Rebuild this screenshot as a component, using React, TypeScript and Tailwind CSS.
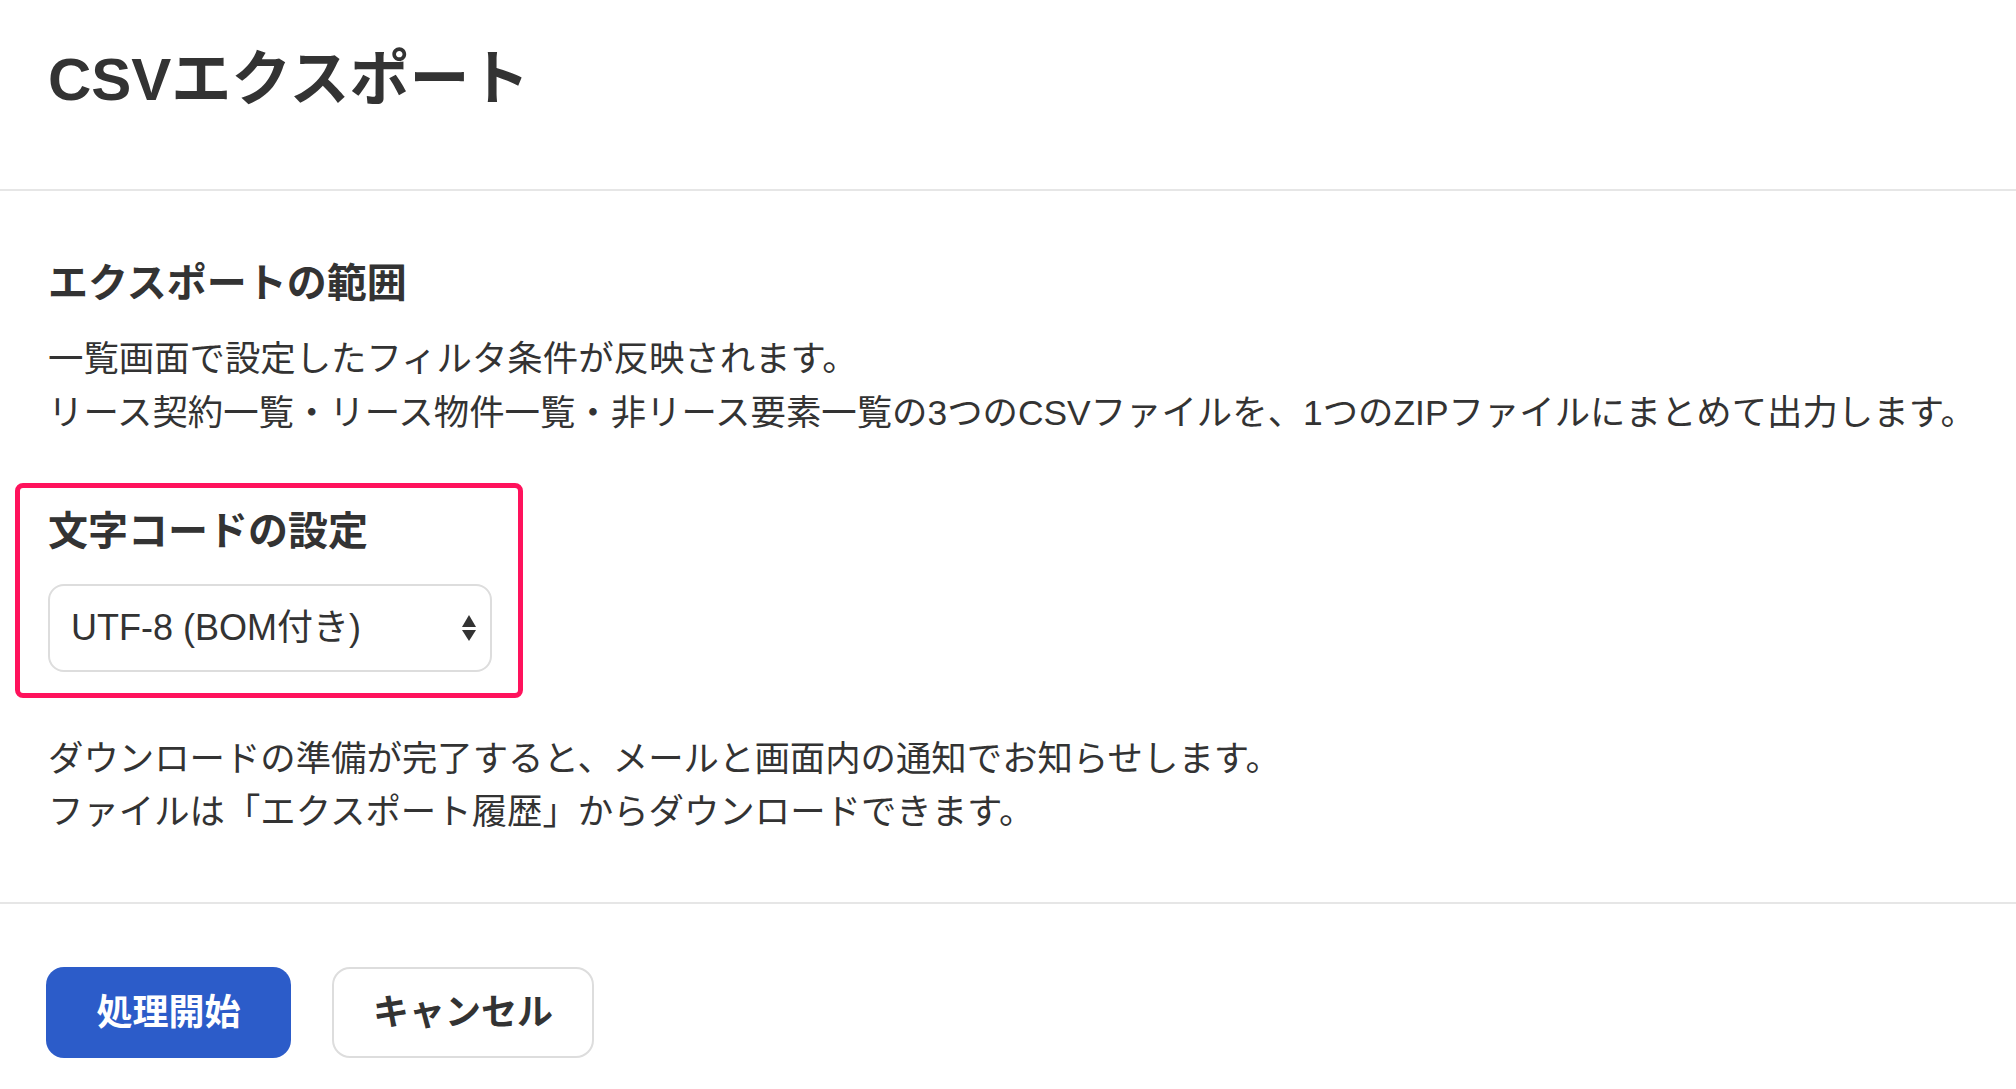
import { useState } from "react"

const font = { fontFamily: '"Liberation Sans", "Noto Sans CJK JP", sans-serif' }

export default function App() {
  const [encoding, setEncoding] = useState("utf8bom")

  return (
    <div className="min-h-screen bg-white text-[#333333]" style={font}>
      <div className="h-[191px] border-b-2 border-[#e6e6e6] px-[48px] pt-[44px]">
        <h1 className="text-[60px] font-bold leading-[72px]">CSVエクスポート</h1>
      </div>

      <div className="px-[48px]">
        <h2 className="mt-[68px] text-[40px] font-bold leading-[48px]">エクスポートの範囲</h2>
        <p className="mt-[25px] whitespace-nowrap text-[35.4px] leading-[54px]">
          一覧画面で設定したフィルタ条件が反映されます。
          <br />
          リース契約一覧・リース物件一覧・非リース要素一覧の3つのCSVファイルを、1つのZIPファイルにまとめて出力します。
        </p>

        <div className="-ml-[33px] mt-[43px] w-[508px] rounded-[8px] border-[5px] border-[#ff125c] pb-[21px] pl-[28px] pt-[19px]">
          <h2 className="text-[40px] font-bold leading-[48px]">文字コードの設定</h2>
          <div className="relative mt-[29px] w-[444px]">
            <select
              value={encoding}
              onChange={(e) => setEncoding(e.target.value)}
              className="h-[88px] w-full appearance-none rounded-[16px] border-2 border-[#dddddd] bg-white pl-[21px] text-[36px] text-[#333333] outline-none"
              style={font}
            >
              <option value="utf8bom">UTF-8 (BOM付き)</option>
              <option value="utf8">UTF-8</option>
              <option value="sjis">Shift_JIS</option>
            </select>
            <svg
              className="pointer-events-none absolute right-[16px] top-[31px]"
              width="14"
              height="26"
              viewBox="0 0 14 26"
            >
              <path d="M7 0 L14 12 L0 12 Z" fill="#333333" />
              <path d="M0 15 L14 15 L7 26 Z" fill="#333333" />
            </svg>
          </div>
        </div>

        <p className="mt-[35px] whitespace-nowrap text-[35.4px] leading-[53px]">
          ダウンロードの準備が完了すると、メールと画面内の通知でお知らせします。
          <br />
          ファイルは「エクスポート履歴」からダウンロードできます。
        </p>
      </div>

      <div className="mt-[63px] border-t-2 border-[#e6e6e6] px-[46px] pt-[63px]">
        <div className="flex gap-[41px]">
          <button className="h-[91px] w-[245px] rounded-[18px] bg-[#2c5cc9] text-[36px] font-bold text-white">
            処理開始
          </button>
          <button className="h-[91px] w-[262px] rounded-[18px] border-2 border-[#dddddd] bg-white text-[36px] font-bold text-[#333333]">
            キャンセル
          </button>
        </div>
      </div>
    </div>
  )
}
